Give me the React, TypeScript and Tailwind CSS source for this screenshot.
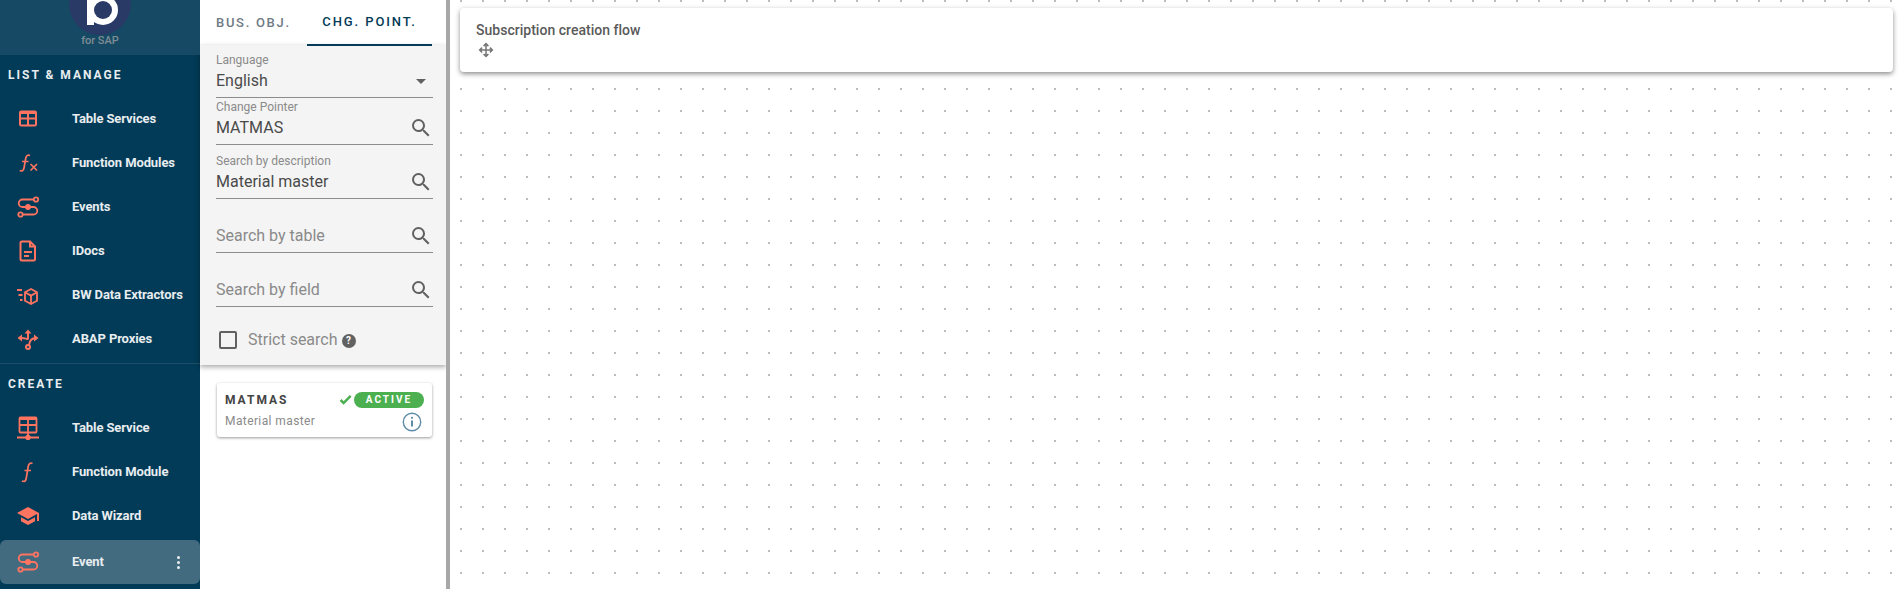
import React from 'react';

const ICON = '#ff7461';

const SearchIcon: React.FC = () => (
    <svg viewBox="0 0 24 24" className="w-[24px] h-[24px] fill-[#616161]">
        <path d="M9.5,3A6.5,6.5 0 0,1 16,9.5C16,11.11 15.41,12.59 14.44,13.73L14.71,14H15.5L20.5,19L19,20.5L14,15.5V14.71L13.73,14.44C12.59,15.41 11.11,16 9.5,16A6.5,6.5 0 0,1 3,9.5A6.5,6.5 0 0,1 9.5,3M9.5,5C7,5 5,7 5,9.5C5,12 7,14 9.5,14C12,14 14,12 14,9.5C14,7 12,5 9.5,5Z" />
    </svg>
);

// Sidebar icons, all on a 24 box
const TableIcon = () => (
    <svg viewBox="0 0 24 24" width="24" height="24" fill="none" stroke={ICON} strokeWidth="2">
        <rect x="4" y="4.500" width="16" height="14" rx="1.200" />
        <path d="M4 5.500h16" strokeWidth="3" />
        <path d="M4 11.500h16M12 5v13.500" />
    </svg>
);

const FxIcon = () => (
    <svg viewBox="0 0 24 24" width="26" height="26" fill="none" stroke={ICON} strokeWidth="1.7">
        <path d="M14 4.500c-2.500-1-3.800.2-4.300 3L8 17c-.5 2.700-2 3.500-4.300 2.500M6 10.500h6.500" />
        <path d="M14.500 13l6.500 6.500M21 13l-6.500 6.500" />
    </svg>
);

const EventIcon = () => (
    <svg viewBox="0 0 24 24" width="24" height="24" fill="none" stroke={ICON} strokeWidth="1.8">
        <circle cx="20" cy="4.500" r="2.200" />
        <circle cx="4.500" cy="19.500" r="2.200" />
        <circle cx="12" cy="12" r="2" fill={ICON} />
        <path d="M17.800 4.500H6.500a3.700 3.700 0 0 0 0 7.500h11a3.700 3.700 0 0 1 0 7.500H6.700" />
    </svg>
);

const DocIcon = () => (
    <svg viewBox="0 0 24 24" width="24" height="24" fill="none" stroke={ICON} strokeWidth="2">
        <path d="M6 2.500h8l5 5v12.500a1.500 1.500 0 0 1-1.500 1.500h-11.500a1.500 1.500 0 0 1-1.500-1.500v-16a1.500 1.500 0 0 1 1.500-1.500z" />
        <path d="M14 2.500v5h5M8 13h8M8 17h5" />
    </svg>
);

const CubeIcon = () => (
    <svg viewBox="0 0 24 24" width="24" height="24" fill="none" stroke={ICON} strokeWidth="1.8">
        <path d="M15 6l6 3.300v8.400l-6 3.300-6-3.300v-8.400z" />
        <path d="M9 9.300l6 3.300 6-3.300M15 12.600v8.400" />
        <path d="M1 7h5M2.500 12h4M4 17h2.500" />
    </svg>
);

const ProxyIcon = () => (
    <svg viewBox="0 0 24 24" width="24" height="24" fill="none" stroke={ICON} strokeWidth="2">
        <circle cx="12" cy="20" r="2" />
        <path d="M12 5v7.500M13 18c.5-4 3-7 7-7M12 12.500c-1.500-1-4-1.500-7-1.500" />
        <path d="M8.500 6.500l3.500-4 3.500 4z" fill={ICON} stroke="none" />
        <path d="M6 7.500l-4.500 3.500 4.500 3.500zM18 7.500l4.500 3.500-4.500 3.500z" fill={ICON} stroke="none" />
    </svg>
);

const TableServiceIcon = () => (
    <svg viewBox="0 0 24 24" width="24" height="24" fill="none" stroke={ICON} strokeWidth="1.800">
        <rect x="3.500" y="1.500" width="17" height="15" rx="1" />
        <path d="M3.500 2.500h17" strokeWidth="3" />
        <path d="M3.500 9h17M12 2v14.500M12 16.500v5M1 21.500h22" />
        <circle cx="12" cy="21.500" r="1.800" fill={ICON} />
    </svg>
);

const FunctionIcon = () => (
    <svg viewBox="0 0 24 24" width="24" height="24" fill="none" stroke={ICON} strokeWidth="1.700">
        <path d="M16.500 3.500c-2.500-1-3.800.2-4.300 3l-2 12c-.5 2.700-2 3.500-4.300 2.500M8.500 10.500h6.500" />
    </svg>
);

const SchoolIcon = () => (
    <svg viewBox="0 0 24 24" width="26" height="26" fill={ICON}>
        <path d="M12,3L1,9L12,15L21,10.09V17H23V9M5,13.18V17.18L12,21L19,17.18V13.18L12,17L5,13.18Z" />
    </svg>
);

const NavItem: React.FC<{ icon: React.ReactElement; label: string; active?: boolean }> = ({ icon, label, active }) => (
    <div className={`flex items-center h-[44px] pl-[16px] pr-[20px] rounded-md ${active ? 'bg-[#426b80] mt-[2px]' : ''}`}>
        <div className="w-[24px] h-[24px] flex items-center justify-center shrink-0">{icon}</div>
        <span className="ml-[32px] text-[13px] font-bold text-[#e8edf0] tracking-[-0.1px] whitespace-nowrap">{label}</span>
        {active && (
            <div className="ml-auto flex flex-col gap-[2px]">
                <span className="w-[3px] h-[3px] rounded-full bg-[#e8edf0]" />
                <span className="w-[3px] h-[3px] rounded-full bg-[#e8edf0]" />
                <span className="w-[3px] h-[3px] rounded-full bg-[#e8edf0]" />
            </div>
        )}
    </div>
);

const Field: React.FC<{ label?: string; value?: string; placeholder?: string; height: string; children?: React.ReactNode }> = ({ label, value, placeholder, height, children }) => (
    <div className={`${height} ml-[16px] mr-[13px] border-b border-[#8c8c8c] flex flex-col justify-end`}>
        {label && <div className="mb-[1px] text-[12px] leading-[14px] text-[#8a8a8a]">{label}</div>}
        <div className="flex items-center justify-between h-[29px] pb-[3px]">
            <span className={`text-[16px] ${value ? 'text-[#4a4a4a]' : 'text-[#8a8a8a]'}`}>{value ?? placeholder}</span>
            {children ?? <SearchIcon />}
        </div>
    </div>
);

export default function App() {
    return (
        <div className="flex h-screen w-full overflow-hidden bg-white font-['Roboto',sans-serif]">
            {/* Sidebar */}
            <aside className="w-[200px] shrink-0 bg-[#023b57]">
                <div className="relative h-[55px] overflow-hidden bg-[#164a64]">
                    <div className="absolute left-[69px] top-[-27px] w-[62px] h-[62px] rounded-full bg-[#2a3a66]" />
                    <svg viewBox="0 0 40 30" className="absolute left-[85px] top-0 w-[40px] h-[30px]">
                        <rect x="2" y="0" width="7" height="25" fill="#ffffff" />
                        <circle cx="18" cy="10" r="15" fill="#ffffff" />
                        <circle cx="18" cy="10" r="9" fill="#2a3a66" />
                    </svg>
                    <div className="absolute left-0 right-0 top-[35px] text-center text-[11px] leading-[12px] font-medium text-[#7f8c96]">for SAP</div>
                </div>
                <div className="h-[42px] pl-[8px] flex items-center pb-[3px] text-[12px] font-bold tracking-[2px] text-[#e8edf0]">LIST &amp; MANAGE</div>
                <NavItem icon={<TableIcon />} label="Table Services" />
                <NavItem icon={<FxIcon />} label="Function Modules" />
                <NavItem icon={<EventIcon />} label="Events" />
                <NavItem icon={<DocIcon />} label="IDocs" />
                <NavItem icon={<CubeIcon />} label="BW Data Extractors" />
                <NavItem icon={<ProxyIcon />} label="ABAP Proxies" />
                <div className="mt-[2px] border-t border-[#1d5068]" />
                <div className="h-[42px] pl-[8px] flex items-center pb-[3px] text-[12px] font-bold tracking-[2px] text-[#e8edf0]">CREATE</div>
                <NavItem icon={<TableServiceIcon />} label="Table Service" />
                <NavItem icon={<FunctionIcon />} label="Function Module" />
                <NavItem icon={<SchoolIcon />} label="Data Wizard" />
                <NavItem icon={<EventIcon />} label="Event" active />
            </aside>

            {/* Search panel */}
            <section className="w-[246px] shrink-0">
                <div className="h-[45px] flex items-start">
                    <div className="w-[107px] pl-[16px] h-[45px] flex items-center text-[13px] font-medium tracking-[1.7px] text-[#6f7b85] whitespace-nowrap">BUS. OBJ.</div>
                    <div className="relative w-[125px] h-[46px] flex items-center justify-center border-b-2 border-[#023b57] text-[13px] font-medium tracking-[1.9px] text-[#023b57] whitespace-nowrap">CHG. POINT.</div>
                </div>
                <div className="h-[320px] bg-[#f4f4f4] shadow-[0_2px_5px_rgba(0,0,0,0.35)]">
                    <Field label="Language" value="English" height="h-[53px]">
                        <span className="mr-[7px] w-0 h-0 border-x-[5px] border-x-transparent border-t-[5px] border-t-[#616161]" />
                    </Field>
                    <Field label="Change Pointer" value="MATMAS" height="h-[47px]" />
                    <Field label="Search by description" value="Material master" height="h-[54px]" />
                    <Field placeholder="Search by table" height="h-[54px]" />
                    <Field placeholder="Search by field" height="h-[54px]" />
                    <div className="flex items-center mt-[21px] ml-[19px]">
                        <span className="w-[18px] h-[18px] border-2 border-[#616161] rounded-[2px]" />
                        <span className="ml-[11px] text-[16px] text-[#8a8a8a]">Strict search</span>
                        <span className="ml-[4px] mt-[2px] w-[14px] h-[14px] rounded-full bg-[#616161] text-white text-[10px] font-bold leading-[14px] text-center">?</span>
                    </div>
                </div>
                <div className="mt-[18px] ml-[17px] w-[215px] h-[54px] bg-white rounded-[3px] shadow-[0_1px_3px_rgba(0,0,0,0.4)] pl-[8px] pr-[8px] pt-[8px]">
                    <div className="flex items-center h-[17px]">
                        <span className="text-[12px] font-bold tracking-[2px] text-[#444]">MATMAS</span>
                        <svg viewBox="0 0 24 24" className="ml-auto mr-[1px] w-[15px] h-[15px] fill-[#4caf50]">
                            <path d="M9,20.42L2.79,14.21L5.62,11.38L9,14.77L18.88,4.88L21.71,7.71L9,20.42Z" />
                        </svg>
                        <span className="w-[70px] h-[16px] rounded-full bg-[#4caf50] text-white text-[10px] font-bold tracking-[2px] leading-[16px] text-center">ACTIVE</span>
                    </div>
                    <div className="flex items-start justify-between">
                        <span className="mt-[6px] text-[12px] leading-[14px] text-[#8a8a8a] tracking-[0.4px]">Material master</span>
                        <svg viewBox="0 0 20 20" className="mt-[4px] w-[20px] h-[20px] mr-[2px]" fill="none" stroke="#5d8ca8" strokeWidth="1.400">
                            <circle cx="10" cy="10" r="8.700" />
                            <path d="M10 8.500v6" strokeWidth="2" />
                            <circle cx="10" cy="5.800" r="1.100" fill="#5d8ca8" stroke="none" />
                        </svg>
                    </div>
                </div>
            </section>

            {/* Flow canvas */}
            <main className="flex-1 min-w-0 border-l-4 border-[#a8a8a8] pl-[10px] pr-[6px] pt-[8px] bg-[radial-gradient(circle,#bdbdbd_1px,transparent_1.3px)] bg-[length:22px_22px] bg-[position:0px_-10px]">
                <div className="h-[64px] bg-white rounded-[4px] shadow-[0_2px_5px_rgba(0,0,0,0.45)] pl-[16px] pt-[14px]">
                    <div className="text-[14px] leading-[16px] font-medium tracking-[0.02px] text-[#5a5a5a]">Subscription creation flow</div>
                    <svg viewBox="0 0 24 24" className="mt-[3px] w-[18px] h-[18px] ml-[1px] fill-[#757575]">
                        <path d="M13,11H18L16.5,9.5L17.92,8.08L21.84,12L17.92,15.92L16.5,14.5L18,13H13V18L14.5,16.5L15.92,17.92L12,21.84L8.08,17.92L9.5,16.5L11,18V13H6L7.5,14.5L6.08,15.92L2.16,12L6.08,8.08L7.5,9.5L6,11H11V6L9.5,7.5L8.08,6.08L12,2.16L15.92,6.08L14.5,7.5L13,6V11Z" />
                    </svg>
                </div>
            </main>
        </div>
    );
}
